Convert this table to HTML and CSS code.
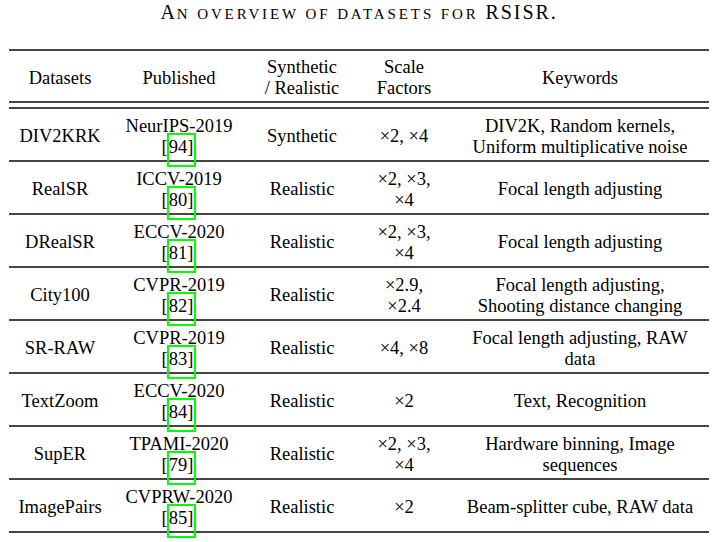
FILE: index.html
```html
<!DOCTYPE html>
<html>
<head>
<meta charset="utf-8">
<link rel="stylesheet" href="styles.css">
</head>
<body>
<div class="page">
  <div class="caption">A<span class="sc">n overview of datasets for</span> RSISR.</div>
  <div class="table">
    <div class="row head">
      <div class="cell">Datasets</div>
      <div class="cell">Published</div>
      <div class="cell">Synthetic<br>/ Realistic</div>
      <div class="cell">Scale<br>Factors</div>
      <div class="cell">Keywords</div>
    </div>
    <div class="body">
      <div class="row">
        <div class="cell">DIV2KRK</div>
        <div class="cell">NeurIPS-2019<br>[<span class="cite">94]</span></div>
        <div class="cell">Synthetic</div>
        <div class="cell">×2, ×4</div>
        <div class="cell">DIV2K, Random kernels,<br>Uniform multiplicative noise</div>
      </div>
      <div class="row">
        <div class="cell">RealSR</div>
        <div class="cell">ICCV-2019<br>[<span class="cite">80]</span></div>
        <div class="cell">Realistic</div>
        <div class="cell">×2, ×3,<br>×4</div>
        <div class="cell">Focal length adjusting</div>
      </div>
      <div class="row">
        <div class="cell">DRealSR</div>
        <div class="cell">ECCV-2020<br>[<span class="cite">81]</span></div>
        <div class="cell">Realistic</div>
        <div class="cell">×2, ×3,<br>×4</div>
        <div class="cell">Focal length adjusting</div>
      </div>
      <div class="row">
        <div class="cell">City100</div>
        <div class="cell">CVPR-2019<br>[<span class="cite">82]</span></div>
        <div class="cell">Realistic</div>
        <div class="cell">×2.9,<br>×2.4</div>
        <div class="cell">Focal length adjusting,<br>Shooting distance changing</div>
      </div>
      <div class="row">
        <div class="cell">SR-RAW</div>
        <div class="cell">CVPR-2019<br>[<span class="cite">83]</span></div>
        <div class="cell">Realistic</div>
        <div class="cell">×4, ×8</div>
        <div class="cell">Focal length adjusting, RAW<br>data</div>
      </div>
      <div class="row">
        <div class="cell">TextZoom</div>
        <div class="cell">ECCV-2020<br>[<span class="cite">84]</span></div>
        <div class="cell">Realistic</div>
        <div class="cell">×2</div>
        <div class="cell">Text, Recognition</div>
      </div>
      <div class="row">
        <div class="cell">SupER</div>
        <div class="cell">TPAMI-2020<br>[<span class="cite">79]</span></div>
        <div class="cell">Realistic</div>
        <div class="cell">×2, ×3,<br>×4</div>
        <div class="cell">Hardware binning, Image<br>sequences</div>
      </div>
      <div class="row">
        <div class="cell">ImagePairs</div>
        <div class="cell">CVPRW-2020<br>[<span class="cite">85]</span></div>
        <div class="cell">Realistic</div>
        <div class="cell">×2</div>
        <div class="cell">Beam-splitter cube, RAW data</div>
      </div>
    </div>
  </div>
</div>
</body>
</html>
```
FILE: styles.css
```css
html, body {
  margin: 0;
  padding: 0;
  background: #fff;
}
.page {
  width: 720px;
  height: 542px;
  padding: 0 11px 0 9px;
  box-sizing: border-box;
  font-family: "Liberation Serif", "Times New Roman", serif;
  color: #000;
  overflow: hidden;
}
.caption {
  font-size: 20px;
  text-align: center;
  height: 49px;
  line-height: 25px;
  letter-spacing: 1.9px;
  white-space: nowrap;
}
.sc {
  font-size: 15px;
  text-transform: uppercase;
  letter-spacing: 2.9px;
}
.table {
  width: 700px;
  border-top: 2px solid #444;
}
.row {
  display: grid;
  grid-template-columns: 102px 136px 110px 94px 258px;
  align-items: center;
  height: 51px;
  border-bottom: 2px solid #444;
  font-size: 18.5px;
  line-height: 21px;
}
.head {
  height: 50px;
}
.body {
  margin-top: 4px;
  border-top: 2px solid #444;
}
.cell {
  text-align: center;
  padding-top: 4px;
}
.cite {
  border: 2px solid #00ff00;
  padding: 2px 1px 8px 0;
  margin-left: -1px;
}
```
